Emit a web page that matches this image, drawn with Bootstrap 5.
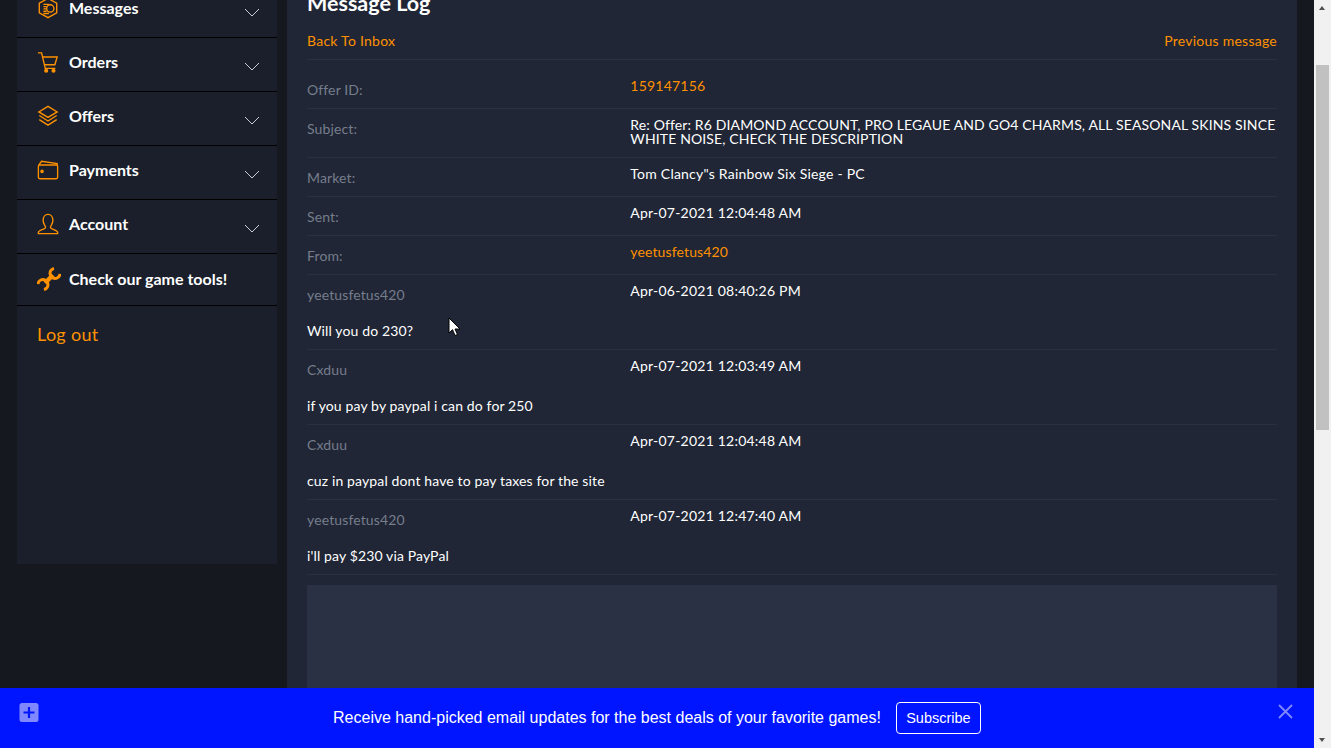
<!DOCTYPE html>
<html lang="en">
<head>
<meta charset="utf-8">
<title>Message Log</title>
<link href="https://cdn.jsdelivr.net/npm/bootstrap@5.3.0/dist/css/bootstrap.min.css" rel="stylesheet">
<style>
html,body{height:100%;overflow:hidden;background:#15191f;}
body{font-family:"Lato","Noto Sans",sans-serif;font-size:14px;color:#fff;letter-spacing:.13px;}
a{color:#ff9100;text-decoration:none;}
.app-viewport{width:1314px;height:748px;}
.app-scrolled{padding-left:17px;margin-top:-16px;gap:10px;}
.side-panel{width:260px;height:580px;background:#1a1f2b;flex:none;}
.side-item{height:54px;border-bottom:1px solid #000;padding:0 17px 5px 20px;font-size:16px;font-weight:700;letter-spacing:0;color:#fff;}
.side-item.tools{height:52px;padding-bottom:2px;}
.side-item svg.ico{width:22px;height:22px;margin-right:10px;flex:none;}
.side-item.tools svg.ico{width:24px;height:24px;margin-right:8px;}
.chev{width:16px;height:9px;margin-left:auto;margin-top:8px;}
.logout{font-size:18px;padding:15px 20px;display:block;line-height:27px;letter-spacing:.3px;}
.main-panel{width:1010px;height:780px;background:#202635;flex:none;padding:0 20px;}
.page-title{font-size:21.5px;font-weight:700;line-height:24px;margin:7px 0 0;padding:0;letter-spacing:0;}
.top-border{border-bottom:1px solid #2a3040;height:45px;}
.top-border a{letter-spacing:.25px;}
.msg-row{border-bottom:1px solid #2a3040;padding-top:9px;padding-bottom:8px;}
.msg-row.first{padding-top:19px;}
.lbl{color:#767d8c;line-height:21px;}
.val{line-height:14px;}
.val.two{padding-bottom:3px;}
.val.stamp{letter-spacing:.22px;}
.msg-text{line-height:21px;margin-top:15px;}
.reply-box{height:300px;background:#2a3144;margin-top:10px;}
.fake-scroll{width:17px;height:748px;background:#f1f1f1;flex:none;padding:0 2px;}
.fake-thumb{height:365px;background:#c1c1c1;margin-top:65px;}
.arrow-up,.arrow-down{position:absolute;left:5px;width:0;height:0;border-left:3.5px solid transparent;border-right:3.5px solid transparent;}
.arrow-up{top:6px;border-bottom:4px solid #505050;}
.arrow-down{bottom:6px;border-top:4px solid #505050;}
.promo-bar{left:0;right:0;bottom:0;height:60px;background:#0015ff;font-family:"Liberation Sans",Arial,sans-serif;font-size:16px;letter-spacing:0;}
.promo-plus{left:19px;top:15px;width:20px;height:19px;}
.promo-close{left:1278px;top:16px;width:15px;height:15px;}
.promo-btn{width:85px;height:32px;border:1px solid #fff;border-radius:4px;color:#fff;font-size:14.5px;padding:0;line-height:30px;margin-left:15px;background:transparent;}
.mouse-cursor{left:448px;top:317px;width:13px;height:20px;}
</style>
</head>
<body>
<div class="d-flex">
  <div class="app-viewport position-relative overflow-hidden">
    <div class="app-scrolled d-flex align-items-start">
      <aside class="side-panel">
        <nav class="nav flex-column">
          <a class="side-item d-flex align-items-center" href="#">
            <svg class="ico" viewBox="0 0 24 24" fill="none" stroke="#ff9100" stroke-width="1.500"><path d="M12 1.500l9.500 5.300v10.400L12 22.500l-9.500-5.300V6.800z"/><circle cx="14.500" cy="12.500" r="4"/><path d="M7 8h6M7 10.500h3.500M7 13h3M7 15.500h3.500M7 18h6"/></svg>Messages
            <svg class="chev" viewBox="0 0 16 9" fill="none" stroke="#c9ccd2" stroke-width="1"><path d="M1 1l7 7 7-7"/></svg></a>
          <a class="side-item d-flex align-items-center" href="#">
            <svg class="ico" viewBox="0 0 24 24" fill="none" stroke="#ff9100" stroke-width="1.500"><path d="M1 2h4l4 17h11"/><path d="M6 6.500h16l-2.500 8.500H8"/><circle cx="10" cy="21.500" r="1.500" fill="#ff9100"/><circle cx="18" cy="21.500" r="1.500" fill="#ff9100"/></svg>Orders
            <svg class="chev" viewBox="0 0 16 9" fill="none" stroke="#c9ccd2" stroke-width="1"><path d="M1 1l7 7 7-7"/></svg></a>
          <a class="side-item d-flex align-items-center" href="#">
            <svg class="ico" viewBox="0 0 24 24" fill="none" stroke="#ff9100" stroke-width="1.500"><path d="M12 1.500l10 6-10 6-10-6z"/><path d="M2.500 11.500l9.500 6 9.500-6"/><path d="M2.500 16l9.500 6 9.500-6"/></svg>Offers
            <svg class="chev" viewBox="0 0 16 9" fill="none" stroke="#c9ccd2" stroke-width="1"><path d="M1 1l7 7 7-7"/></svg></a>
          <a class="side-item d-flex align-items-center" href="#">
            <svg class="ico" viewBox="0 0 24 24" fill="none" stroke="#ff9100" stroke-width="1.500"><rect x="1.500" y="6.500" width="21" height="15" rx="1.500"/><path d="M2 6.500L5 2.500l17 2.500v2"/><circle cx="5.500" cy="13.500" r="1.200" fill="#ff9100"/></svg>Payments
            <svg class="chev" viewBox="0 0 16 9" fill="none" stroke="#c9ccd2" stroke-width="1"><path d="M1 1l7 7 7-7"/></svg></a>
          <a class="side-item d-flex align-items-center" href="#">
            <svg class="ico" viewBox="0 0 24 24" fill="none" stroke="#ff9100" stroke-width="1.500"><path d="M1.500 22.500v-1.500c0-2 6-3 7.500-4.500.7-1 .2-2-.8-3.500-1-1.500-1.500-3-1.500-5 0-3.500 2-6.500 5.300-6.500s5.300 3 5.300 6.500c0 2-.5 3.500-1.500 5-1 1.500-1.500 2.500-.8 3.500 1.500 1.500 7.500 2.500 7.500 4.500v1.500z"/></svg>Account
            <svg class="chev" viewBox="0 0 16 9" fill="none" stroke="#c9ccd2" stroke-width="1"><path d="M1 1l7 7 7-7"/></svg></a>
          <a class="side-item tools d-flex align-items-center" href="#">
            <svg class="ico" viewBox="0 0 24 24" fill="none" stroke="#ff9100"><path d="M8 16l8-8" stroke-width="4.500"/><path d="M23 7A5 5 0 1 1 17 1.500" stroke-width="3"/><path d="M1 17A5 5 0 1 1 7 22.500" stroke-width="3"/></svg>Check our game tools!</a>
          <a class="logout" href="#">Log out</a>
        </nav>
      </aside>
      <main class="main-panel">
        <h2 class="page-title">Message Log</h2>
        <div class="top-border d-flex justify-content-between align-items-end pb-2">
          <a href="#">Back To Inbox</a><a href="#">Previous message</a>
        </div>
        <div class="row g-0 msg-row first"><div class="col-4 lbl">Offer ID:</div><div class="col-8 val stamp"><a href="#">159147156</a></div></div>
        <div class="row g-0 msg-row"><div class="col-4 lbl">Subject:</div><div class="col-8 val two">Re: Offer: R6 DIAMOND ACCOUNT, PRO LEGAUE AND GO4 CHARMS, ALL SEASONAL SKINS SINCE WHITE NOISE, CHECK THE DESCRIPTION</div></div>
        <div class="row g-0 msg-row"><div class="col-4 lbl">Market:</div><div class="col-8 val stamp">Tom Clancy"s Rainbow Six Siege - PC</div></div>
        <div class="row g-0 msg-row"><div class="col-4 lbl">Sent:</div><div class="col-8 val stamp">Apr-07-2021 12:04:48 AM</div></div>
        <div class="row g-0 msg-row"><div class="col-4 lbl">From:</div><div class="col-8 val"><a href="#">yeetusfetus420</a></div></div>
        <div class="row g-0 msg-row"><div class="col-4 lbl">yeetusfetus420</div><div class="col-8 val stamp">Apr-06-2021 08:40:26 PM</div><div class="col-12 msg-text">Will you do 230?</div></div>
        <div class="row g-0 msg-row"><div class="col-4 lbl">Cxduu</div><div class="col-8 val stamp">Apr-07-2021 12:03:49 AM</div><div class="col-12 msg-text">if you pay by paypal i can do for 250</div></div>
        <div class="row g-0 msg-row"><div class="col-4 lbl">Cxduu</div><div class="col-8 val stamp">Apr-07-2021 12:04:48 AM</div><div class="col-12 msg-text">cuz in paypal dont have to pay taxes for the site</div></div>
        <div class="row g-0 msg-row"><div class="col-4 lbl">yeetusfetus420</div><div class="col-8 val stamp">Apr-07-2021 12:47:40 AM</div><div class="col-12 msg-text">i'll pay $230 via PayPal</div></div>
        <div class="reply-box"></div>
      </main>
    </div>
    <div class="promo-bar position-absolute d-flex align-items-center justify-content-center">
      <svg class="promo-plus position-absolute" viewBox="0 0 19 19"><rect width="19" height="19" rx="2.500" fill="#8088ff"/><path d="M9.500 4v11M4 9.500h11" stroke="#0015ff" stroke-width="2.200"/></svg>
      <span>Receive hand-picked email updates for the best deals of your favorite games!</span>
      <button type="button" class="btn promo-btn">Subscribe</button>
      <svg class="promo-close position-absolute" viewBox="0 0 15 15"><path d="M1 1l13 13M14 1L1 14" stroke="#7f88ff" stroke-width="1.800"/></svg>
    </div>
    <svg class="mouse-cursor position-absolute" viewBox="0 0 13 20"><path d="M1 1v15l3.500-3.300L7 18.500l2.500-1-2.500-5.500h5z" fill="#fff" stroke="#000" stroke-width="1"/></svg>
  </div>
  <div class="fake-scroll position-relative">
    <div class="arrow-up"></div>
    <div class="fake-thumb"></div>
    <div class="arrow-down"></div>
  </div>
</div>
<script src="https://cdn.jsdelivr.net/npm/bootstrap@5.3.0/dist/js/bootstrap.bundle.min.js"></script>
</body>
</html>
